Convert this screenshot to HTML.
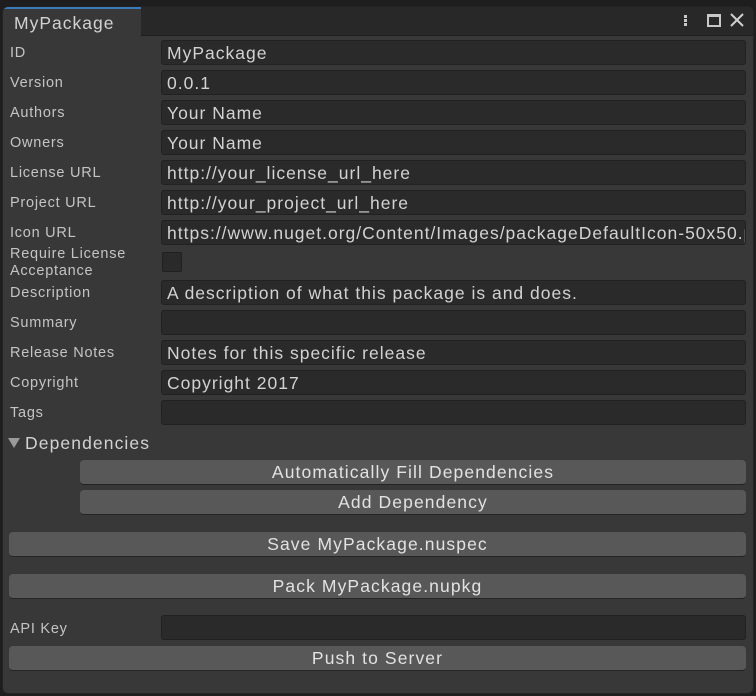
<!DOCTYPE html>
<html><head><meta charset="utf-8"><style>
*{margin:0;padding:0;box-sizing:border-box}
body{width:756px;height:696px;background:#1e1e1e;font-family:"Liberation Sans",sans-serif;overflow:hidden;position:relative}
.win{position:absolute;left:2px;top:6px;width:752px;height:688px;background:#383838;border:1px solid #232323;border-radius:6px;overflow:hidden}
.bar{position:absolute;left:0;top:0;width:752px;height:29px;background:#282828;border-bottom:1px solid #1f1f1f}
.tab{position:absolute;left:0;top:0;width:138px;height:30px;background:#383838;border-top:2px solid #3a79bb;color:#d2d2d2;font-size:17.5px;padding:4px 0 0 11px;letter-spacing:1px}
.a{position:absolute}
.lbl{position:absolute;left:10px;color:#c4c4c4;font-size:14.5px;letter-spacing:.75px}
.f{position:absolute;left:161px;width:585px;height:25px;background:#2a2a2a;border:1px solid #212121;border-radius:3px;color:#d2d2d2;font-size:17.5px;padding:2px 0 0 5px;white-space:nowrap;overflow:hidden;letter-spacing:1px}
.b{position:absolute;height:25px;background:#585858;border-bottom:1px solid #242424;border-radius:4px;color:#e2e2e2;font-size:17.5px;text-align:center;line-height:25px;letter-spacing:1.1px}
</style></head><body>
<div class="win">
<div class="bar"></div>
<div class="tab">MyPackage</div>
<div class="a" style="left:681px;top:8px;width:3px;height:3px;background:#c8c8c8;box-shadow:0 4px #c8c8c8,0 8px #c8c8c8"></div>
<div class="a" style="left:704px;top:7px;width:14px;height:13px;border:2px solid #c8c8c8;border-top-width:3px"></div>
<svg class="a" style="left:727px;top:6px" width="14" height="14"><path d="M1 1L13 13M13 1L1 13" stroke="#d0d0d0" stroke-width="2"/></svg>
</div>
<div class="lbl" style="top:45px">ID</div><div class="f" style="top:40px">MyPackage</div>
<div class="lbl" style="top:75px">Version</div><div class="f" style="top:70px">0.0.1</div>
<div class="lbl" style="top:105px">Authors</div><div class="f" style="top:100px">Your Name</div>
<div class="lbl" style="top:135px">Owners</div><div class="f" style="top:130px">Your Name</div>
<div class="lbl" style="top:165px">License URL</div><div class="f" style="top:160px">http://your_license_url_here</div>
<div class="lbl" style="top:195px">Project URL</div><div class="f" style="top:190px">http://your_project_url_here</div>
<div class="lbl" style="top:225px">Icon URL</div><div class="f" style="top:220px">https://www.nuget.org/Content/Images/packageDefaultIcon-50x50.png</div>
<div class="lbl" style="top:246px;line-height:17px">Require License<br>Acceptance</div>
<div class="a" style="left:162px;top:252px;width:20px;height:20px;background:#2a2a2a;border:1px solid #202020;border-radius:2px"></div>
<div class="lbl" style="top:285px">Description</div><div class="f" style="top:280px">A description of what this package is and does.</div>
<div class="lbl" style="top:315px">Summary</div><div class="f" style="top:310px"></div>
<div class="lbl" style="top:345px">Release Notes</div><div class="f" style="top:340px">Notes for this specific release</div>
<div class="lbl" style="top:375px">Copyright</div><div class="f" style="top:370px">Copyright 2017</div>
<div class="lbl" style="top:405px">Tags</div><div class="f" style="top:400px"></div>
<svg class="a" style="left:8px;top:438px" width="12" height="10"><path d="M0 0H12L6 10Z" fill="#9a9a9a"/></svg>
<div class="a" style="left:25px;top:433px;color:#d2d2d2;font-size:17.5px;letter-spacing:1.1px">Dependencies</div>
<div class="b" style="left:80px;top:460px;width:666px">Automatically Fill Dependencies</div>
<div class="b" style="left:80px;top:490px;width:666px">Add Dependency</div>
<div class="b" style="left:9px;top:532px;width:737px">Save MyPackage.nuspec</div>
<div class="b" style="left:9px;top:574px;width:737px">Pack MyPackage.nupkg</div>
<div class="lbl" style="top:621px">API Key</div><div class="f" style="top:615px"></div>
<div class="b" style="left:9px;top:646px;width:737px">Push to Server</div>
</body></html>
